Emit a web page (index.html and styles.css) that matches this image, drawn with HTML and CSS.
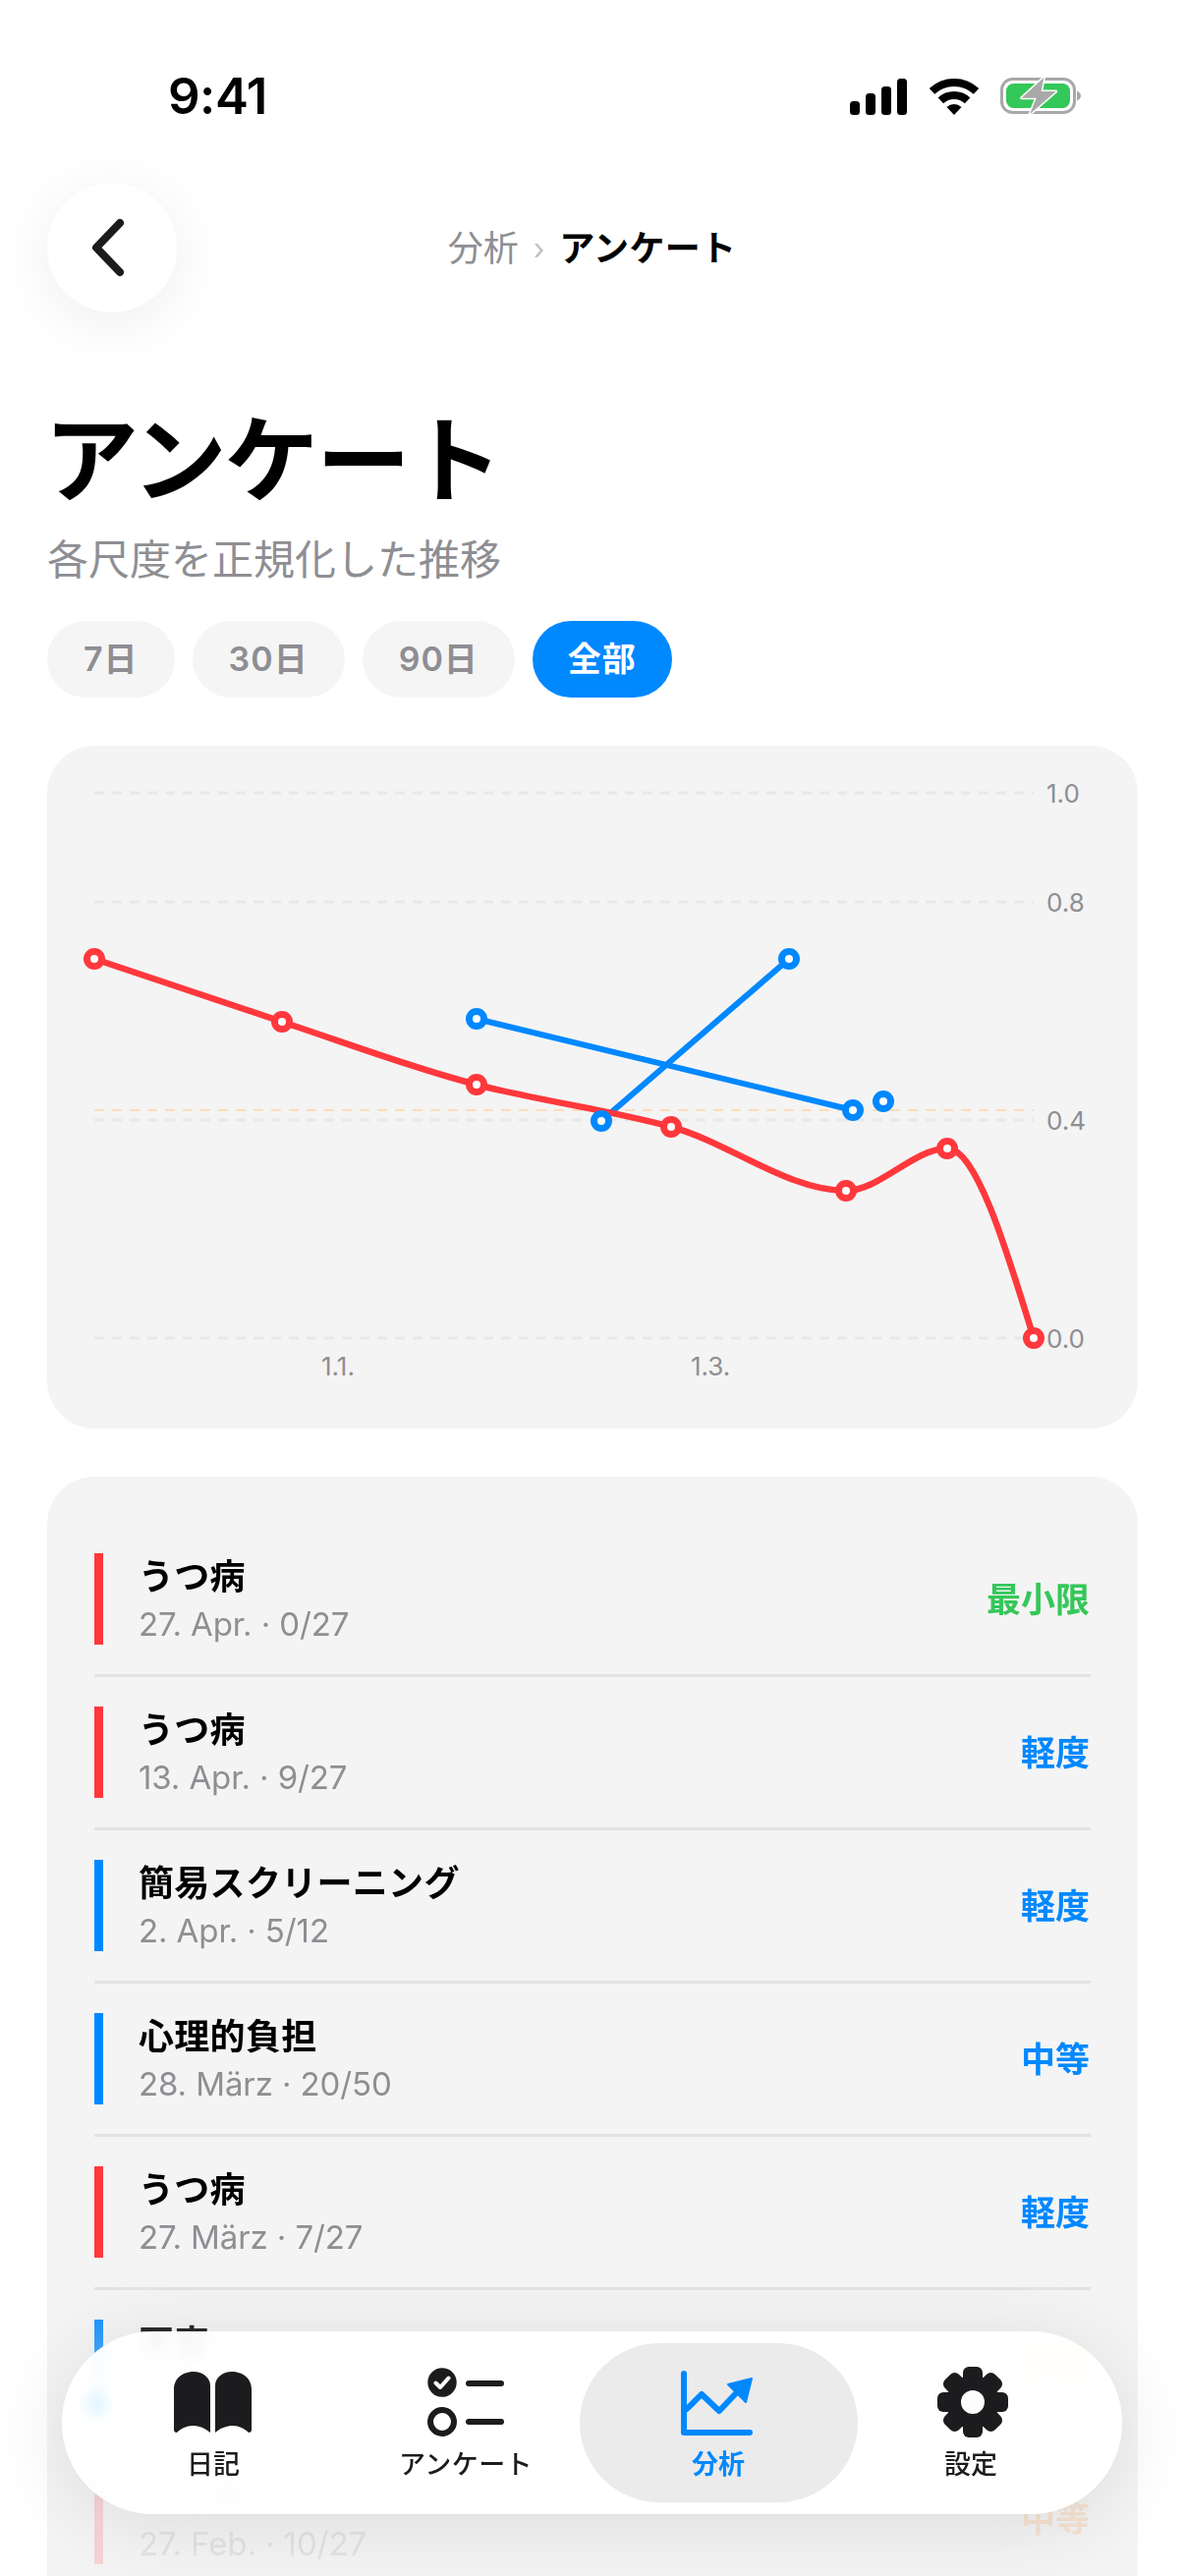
FILE: index.html
```html
<!DOCTYPE html>
<html lang="ja">
<head>
<meta charset="utf-8">
<title>アンケート</title>
<link rel="stylesheet" href="styles.css">
</head>
<body>
<div class="screen">
  <header class="status">
    <span class="time">9:41</span>
    <div class="status-icons">
      <svg class="i-signal" viewBox="0 0 58 37"><rect x="0" y="23" width="10" height="14" rx="3.5"/><rect x="16" y="15" width="10" height="22" rx="3.5"/><rect x="32" y="8" width="10" height="29" rx="3.5"/><rect x="48" y="0" width="10" height="37" rx="3.5"/></svg>
      <svg class="i-wifi" viewBox="0 0 50 37"><path class="wifi-arc" d="M2.5 12.9A33 33 0 0 1 47.5 12.9"/><path class="wifi-arc" d="M11.4 22.4A20 20 0 0 1 38.6 22.4"/><path d="M25 37L17.5 29A11 11 0 0 1 32.5 29Z"/></svg>
      <svg class="i-batt" viewBox="0 0 82 39"><rect class="batt-frame" x="1.5" y="2.5" width="74" height="34" rx="11"/><rect class="batt-fill" x="6" y="7" width="65" height="25" rx="7.5"/><path class="batt-tip" d="M78 14.500C80.500 15.500 82 17.500 82 19.500C82 21.500 80.500 23.500 78 24.500Z"/><path class="batt-bolt" d="M44.300 1L21.700 21.700H36.700L30 38.300L56.700 15H41.700Z"/></svg>
    </div>
  </header>

  <div class="topbar">
    <button class="back" aria-label="戻る">
      <svg viewBox="0 0 36 60"><path d="M30 5L6 30L30 55"/></svg>
    </button>
    <nav class="crumbs"><span class="crumb-parent">分析</span><span class="crumb-sep">›</span><span class="crumb-current">アンケート</span></nav>
  </div>

  <h1 class="title">アンケート</h1>
  <p class="subtitle">各尺度を正規化した推移</p>

  <div class="pills">
    <button class="pill">7日</button>
    <button class="pill">30日</button>
    <button class="pill">90日</button>
    <button class="pill pill-on">全部</button>
  </div>

  <section class="chart">
    <svg viewBox="0 0 1110 695">
      <g class="grid">
        <line x1="48" y1="48" x2="1004" y2="48"/>
        <line x1="48" y1="159" x2="1004" y2="159"/>
        <line x1="48" y1="381" x2="1004" y2="381"/>
        <line x1="48" y1="603" x2="1004" y2="603"/>
      </g>
      <line class="grid-warm" x1="48" y1="371" x2="1004" y2="371"/>
      <g class="axis">
        <text x="1017" y="58">1.0</text>
        <text x="1017" y="169">0.8</text>
        <text x="1017" y="391">0.4</text>
        <text x="1017" y="613">0.0</text>
        <text x="279" y="641">1.1.</text>
        <text x="655" y="641">1.3.</text>
      </g>
      <path class="line-blue" d="M437 278L820 371"/>
      <path class="line-blue" d="M564 382L755 217"/>
      <path class="line-red" d="M48 217C112 238 175 260 239 281C305 303 371 328 437 345C503 362 569 370 635 388C694 404 754 453 813 453C847 453 882 410 916 410C945 410 975 508 1004 603"/>
      <g class="dots-blue">
        <circle cx="437" cy="278" r="7.500"/><circle cx="820" cy="371" r="7.500"/><circle cx="851" cy="362" r="7.500"/><circle cx="564" cy="382" r="7.500"/><circle cx="755" cy="217" r="7.500"/>
      </g>
      <g class="dots-red">
        <circle cx="48" cy="217" r="7.500"/><circle cx="239" cy="281" r="7.500"/><circle cx="437" cy="345" r="7.500"/><circle cx="635" cy="388" r="7.500"/><circle cx="813" cy="453" r="7.500"/><circle cx="916" cy="410" r="7.500"/><circle cx="1004" cy="603" r="7.500"/>
      </g>
    </svg>
  </section>

  <section class="list">
    <div class="rows">
      <article class="row"><i class="bar bar-red"></i><div class="row-text"><h2>うつ病</h2><p>27. Apr. · 0/27</p></div><span class="sev sev-green">最小限</span></article>
      <article class="row"><i class="bar bar-red"></i><div class="row-text"><h2>うつ病</h2><p>13. Apr. · 9/27</p></div><span class="sev sev-blue">軽度</span></article>
      <article class="row"><i class="bar bar-blue"></i><div class="row-text"><h2>簡易スクリーニング</h2><p>2. Apr. · 5/12</p></div><span class="sev sev-blue">軽度</span></article>
      <article class="row"><i class="bar bar-blue"></i><div class="row-text"><h2>心理的負担</h2><p>28. März · 20/50</p></div><span class="sev sev-blue">中等</span></article>
      <article class="row"><i class="bar bar-red"></i><div class="row-text"><h2>うつ病</h2><p>27. März · 7/27</p></div><span class="sev sev-blue">軽度</span></article>
      <article class="row"><i class="bar bar-blue"></i><div class="row-text"><h2>不安</h2><p>18. März · 14/21</p></div><span class="sev sev-yellow">中等</span></article>
      <article class="row"><i class="bar bar-red"></i><div class="row-text"><h2>うつ病</h2><p>27. Feb. · 10/27</p></div><span class="sev sev-orange">中等</span></article>
    </div>
  </section>

  <nav class="tabbar">
    <a class="tab">
      <svg class="tab-icon i-book" viewBox="0 0 79 62"><path d="M0 18C0 6 10 0 20 0C29 0 37 6 37 14V62C31 57 25 55 19 55C13 55 7 58 3 62C1 62 0 61 0 59Z"/><path d="M79 18C79 6 69 0 59 0C50 0 42 6 42 14V62C48 57 54 55 60 55C66 55 72 58 76 62C78 62 79 61 79 59Z"/></svg>
      <span>日記</span>
    </a>
    <a class="tab">
      <svg class="tab-icon i-list" viewBox="0 0 78 70"><circle cx="15" cy="15" r="14.700"/><path class="chk" d="M8.500 15.500L13 20L21.500 10.500"/><circle class="ring" cx="15" cy="55" r="12"/><path class="ln" d="M42 16H75M42 55H75"/></svg>
      <span>アンケート</span>
    </a>
    <a class="tab tab-on">
      <svg class="tab-icon i-trend" viewBox="0 0 76 66"><path class="trend" d="M3 3V63H70M6 39L21 24L39 41L57 22"/><path class="trend-head" d="M48 14L72 8L66 32Z"/></svg>
      <span>分析</span>
    </a>
    <a class="tab">
      <svg class="tab-icon i-gear" viewBox="0 0 72 72">
        <circle cx="36" cy="36" r="27"/>
        <g class="teeth">
          <rect x="26" y="0" width="20" height="20" rx="6"/>
          <rect x="26" y="0" width="20" height="20" rx="6" transform="rotate(45 36 36)"/>
          <rect x="26" y="0" width="20" height="20" rx="6" transform="rotate(90 36 36)"/>
          <rect x="26" y="0" width="20" height="20" rx="6" transform="rotate(135 36 36)"/>
          <rect x="26" y="0" width="20" height="20" rx="6" transform="rotate(180 36 36)"/>
          <rect x="26" y="0" width="20" height="20" rx="6" transform="rotate(225 36 36)"/>
          <rect x="26" y="0" width="20" height="20" rx="6" transform="rotate(270 36 36)"/>
          <rect x="26" y="0" width="20" height="20" rx="6" transform="rotate(315 36 36)"/>
        </g>
        <circle class="hole" cx="36" cy="36" r="12"/>
      </svg>
      <span>設定</span>
    </a>
  </nav>
</div>
</body>
</html>
```

FILE: styles.css
```css
* { box-sizing: border-box; margin: 0; padding: 0; }
html, body { background: #fff; }
body { font-family: "Inter", "Noto Sans CJK JP", sans-serif; color: #000; }
.screen { position: relative; width: 1206px; height: 2622px; overflow: hidden; padding: 0 48px; background: #fff; }

.status { height: 186px; margin: 0 -48px; padding: 78px 106px 0 171px; display: flex; justify-content: space-between; align-items: flex-start; }
.time { font-size: 51px; line-height: 39px; font-weight: 600; letter-spacing: -0.5px; }
.status-icons { display: flex; align-items: center; gap: 23px; }
.i-signal { width: 58px; height: 37px; fill: #000; margin-top: 1px; }
.i-wifi { width: 50px; height: 37px; fill: #000; margin-top: 1px; }
.i-batt { width: 82px; height: 39px; margin-left: -1px; }
.wifi-arc { fill: none; stroke: #000; stroke-width: 8; }
.batt-frame { fill: none; stroke: #a8a8a8; stroke-width: 3; }
.batt-fill { fill: #34c759; }
.batt-tip { fill: #a8a8a8; }
.batt-bolt { fill: #a8a8a8; stroke: #fff; stroke-width: 3; paint-order: stroke; stroke-linejoin: round; }

.topbar { position: relative; height: 132px; padding-top: 2px; display: flex; align-items: center; justify-content: center; }
.back { position: absolute; left: 0; top: 0; width: 132px; height: 132px; border: 0; border-radius: 50%; background: #fff; box-shadow: 0 10px 60px rgba(0, 0, 0, 0.07); display: flex; align-items: center; justify-content: center; }
.back svg { width: 36px; height: 60px; margin-left: -9px; fill: none; stroke: #1c1c1e; stroke-width: 8; stroke-linecap: round; stroke-linejoin: round; }
.crumbs { display: flex; align-items: center; gap: 15px; margin-left: -1px; font-size: 36px; line-height: 48px; }
.crumb-parent { color: #8e8e93; }
.crumb-sep { color: #c0c0c4; font-size: 30px; }
.crumb-current { font-weight: 600; color: #000; letter-spacing: 0.3px; }

.title { margin-top: 90px; margin-left: -3px; font-size: 96px; line-height: 120px; font-weight: 600; letter-spacing: -2.4px; }
.subtitle { margin-top: 17px; font-size: 42px; line-height: 50px; color: #8e8e93; }

.pills { margin-top: 37px; display: flex; gap: 18px; }
.pill { height: 78px; padding: 0 37px; border: 0; border-radius: 39px; background: #f5f5f5; color: #8e8e93; font: 600 34px/78px "Inter", "Noto Sans CJK JP", sans-serif; letter-spacing: 1px; }
.pill-on { padding: 0 36px; background: #0088ff; color: #fff; }

.chart { margin-top: 49px; height: 695px; border-radius: 48px; background: #f4f4f4; }
.chart svg { display: block; width: 1110px; height: 695px; }
.grid line { stroke: #e8e8e8; stroke-width: 3; stroke-dasharray: 10 8; }
.grid-warm { stroke: #ffdcb8; stroke-width: 2; stroke-dasharray: 10 8; }
.axis text { font-size: 26px; fill: #8e8e93; }
.line-blue { fill: none; stroke: #0088ff; stroke-width: 6; stroke-linecap: round; }
.line-red { fill: none; stroke: #ff383c; stroke-width: 6.5; stroke-linecap: round; }
.dots-blue circle { fill: #fff; stroke: #0088ff; stroke-width: 7; }
.dots-red circle { fill: #fff; stroke: #ff383c; stroke-width: 7; }

.list { margin-top: 49px; height: 1200px; padding: 78px 48px 0; border-radius: 48px; background: #f4f4f4; }
.rows { mask-image: linear-gradient(to bottom, #000 0, #000 749px, rgba(0, 0, 0, 0.17) 949px); -webkit-mask-image: linear-gradient(to bottom, #000 0, #000 749px, rgba(0, 0, 0, 0.17) 949px); }
.row { display: flex; align-items: center; padding-bottom: 30px; margin-bottom: 30px; border-bottom: 3px solid #e3e3e3; }
.bar { flex: none; width: 9px; height: 93px; }
.bar-red { background: #ff383c; }
.bar-blue { background: #0088ff; }
.row-text { flex: 1; margin-left: 36px; }
.row-text h2 { font-size: 36px; line-height: 48px; font-weight: 600; color: #000; letter-spacing: 0.3px; }
.row-text p { font-size: 33px; line-height: 45px; padding-top: 2px; margin-bottom: -2px; color: #8e8e93; letter-spacing: -0.1px; }
.sev { margin-right: 1px; margin-bottom: 5px; font-size: 35px; font-weight: 600; }
.sev-green { color: #34c759; }
.sev-blue { color: #0088ff; }
.sev-yellow { color: #ffcc00; }
.sev-orange { color: #ff8d28; }

.tabbar { position: absolute; left: 63px; bottom: 63px; width: 1079px; height: 186px; padding: 12px 0; border-radius: 93px; background: rgba(255, 255, 255, 0.95); backdrop-filter: blur(6px); box-shadow: 0 10px 80px rgba(0, 0, 0, 0.1); display: grid; grid-template-columns: repeat(4, 257px); justify-content: center; }
.tabbar::before { content: ""; position: absolute; left: 15px; top: 54px; width: 40px; height: 40px; border-radius: 50%; background: radial-gradient(circle, rgba(120, 215, 255, 0.2), rgba(120, 215, 255, 0) 70%); }
.tab { display: grid; grid-template-rows: 106px 36px; justify-items: center; color: #1c1c1e; font-size: 27px; line-height: 36px; font-weight: 500; border-radius: 81px; }
.tab-on { margin: 0 -13px; background: #ebebeb; color: #0088ff; font-weight: 600; }
.tab-icon { display: block; margin-top: 29px; }
.i-book { width: 79px; height: 62px; margin-left: -2px; fill: #1c1c1e; }
.i-list { width: 78px; height: 70px; margin-top: 25px; fill: #1c1c1e; }
.i-list + span { letter-spacing: 0.4px; }
.i-list .chk { fill: none; stroke: #fff; stroke-width: 4; stroke-linecap: round; stroke-linejoin: round; }
.i-list .ring { fill: none; stroke: #1c1c1e; stroke-width: 6; }
.i-list .ln { fill: none; stroke: #1c1c1e; stroke-width: 6; stroke-linecap: round; }
.i-trend { width: 76px; height: 66px; margin-top: 28px; fill: none; }
.trend { fill: none; stroke: #0088ff; stroke-width: 6; stroke-linecap: round; stroke-linejoin: round; }
.trend-head { fill: #0088ff; stroke: #0088ff; stroke-width: 2; stroke-linejoin: round; }
.i-gear { width: 72px; height: 72px; margin-top: 24px; margin-left: 4px; fill: #1c1c1e; }
.i-gear .hole { fill: #fdfdfd; }
```
